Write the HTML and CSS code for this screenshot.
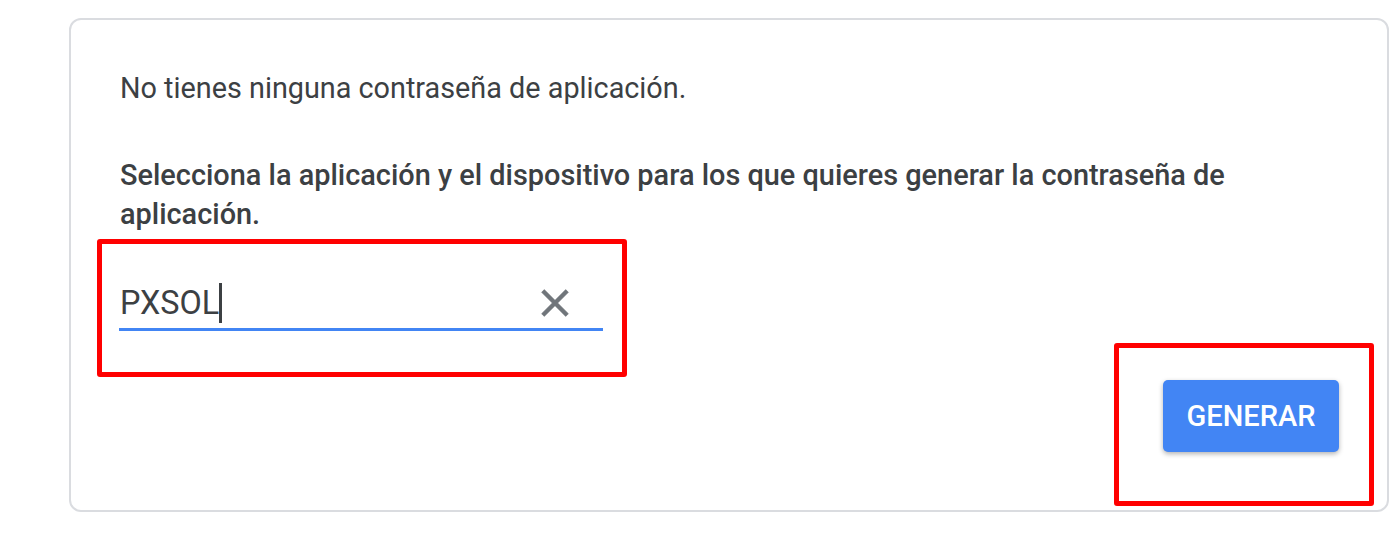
FILE: index.html
```html
<!DOCTYPE html>
<html lang="es">
<head>
<meta charset="utf-8">
<title>Contraseñas de aplicación</title>
<link rel="stylesheet" href="styles.css">
</head>
<body>
<main class="card">
  <p class="empty">No tienes ninguna contraseña de aplicación.</p>
  <p class="prompt">Selecciona la aplicación y el dispositivo para los que quieres generar la contraseña de aplicación.</p>
  <div class="field">
    <span class="value">PXSOL<span class="caret"></span></span>
    <svg class="clear" viewBox="0 0 24 24" aria-label="Borrar"><path d="M19 6.41L17.59 5 12 10.59 6.41 5 5 6.41 10.59 12 5 17.59 6.41 19 12 13.41 17.59 19 19 17.59 13.41 12z"/></svg>
  </div>
  <div class="actions">
    <button class="generate">GENERAR</button>
  </div>
  <div class="mark mark-field"></div>
  <div class="mark mark-button"></div>
</main>
</body>
</html>
```

FILE: styles.css
```css
html, body {
  margin: 0;
  background: #ffffff;
}
body {
  font-family: Roboto, "Liberation Sans", sans-serif;
  color: #3c4043;
}
.card {
  position: relative;
  box-sizing: border-box;
  width: 1320px;
  height: 494px;
  margin: 18px 0 0 69px;
  padding: 49px 48px 0 49px;
  border: 2px solid #dadce0;
  border-radius: 12px;
  display: flex;
  flex-direction: column;
}
.empty {
  margin: 0;
  font-size: 28.8px;
  line-height: 38px;
}
.prompt {
  margin: 49px 0 0;
  font-size: 28.9px;
  line-height: 39px;
  font-weight: 500;
}
.field {
  margin: 44px 0 0 -1px;
  width: 484px;
  height: 50px;
  display: flex;
  align-items: center;
  justify-content: space-between;
  border-bottom: 3px solid #4285f4;
}
.value {
  font-size: 32.4px;
  line-height: 50px;
  color: #3c4043;
  display: flex;
  align-items: center;
  padding-left: 1px;
}
.caret {
  display: inline-block;
  width: 3px;
  height: 40px;
  margin-left: 0;
  background: #3c4043;
}
.clear {
  width: 46px;
  height: 46px;
  fill: #70757a;
  stroke: #70757a;
  stroke-width: 0.3;
  margin-right: 25px;
}
.actions {
  display: flex;
  justify-content: flex-end;
  margin-top: 49px;
}
.generate {
  width: 176px;
  height: 72px;
  border: 0;
  border-radius: 5px;
  background: #4285f4;
  color: #ffffff;
  font-family: Roboto, "Liberation Sans", sans-serif;
  font-size: 29px;
  font-weight: 500;
  box-shadow: 0 2px 5px rgba(0, 0, 0, 0.3);
}
.mark {
  position: absolute;
  border: 5px solid #ff0000;
  border-radius: 3px;
  box-sizing: border-box;
}
.mark-field {
  left: 26px;
  top: 219px;
  width: 530px;
  height: 138px;
}
.mark-button {
  left: 1043px;
  top: 323px;
  width: 260px;
  height: 163px;
}
```
